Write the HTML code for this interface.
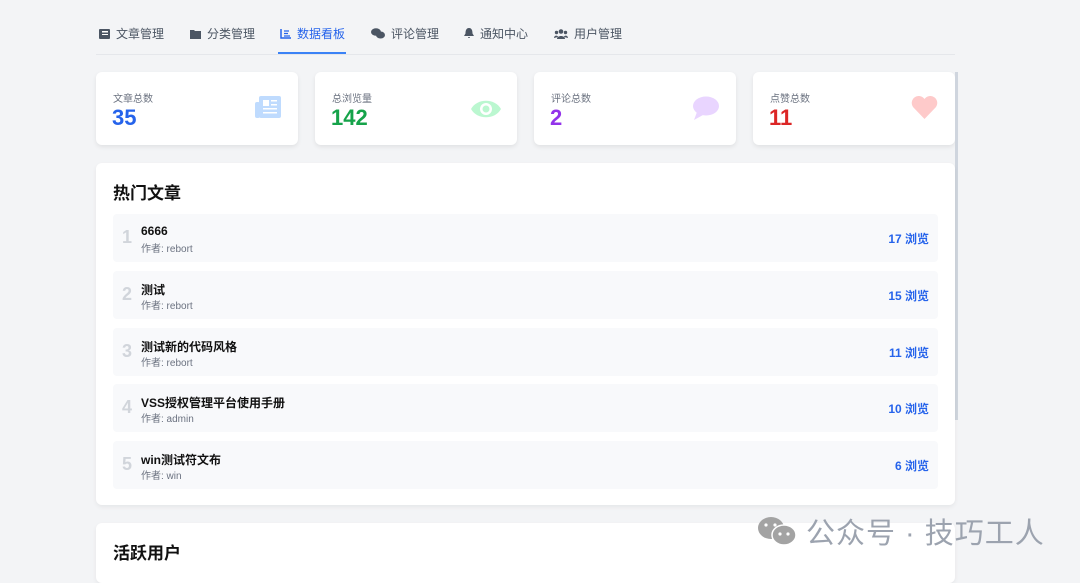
<!DOCTYPE html>
<html><head><meta charset="utf-8"><style>
*{margin:0;padding:0;box-sizing:border-box}
body{width:1080px;height:572px;overflow:hidden;background:#f3f4f6;font-family:"Liberation Sans","Noto Sans CJK SC",sans-serif;position:relative}
.tabs{position:absolute;left:96px;top:0;width:859px;height:55px;border-bottom:1px solid #e5e7eb}
.tab{position:absolute;top:25px;font-size:12px;color:#4b5563;display:flex;align-items:center;gap:6px}
.tab.act{color:#2563eb}
.ul{position:absolute;left:278px;top:52px;width:68px;height:2px;background:#3b82f6}
.card{position:absolute;top:72px;width:202px;height:73px;background:#fff;border-radius:6px;box-shadow:0 2px 5px rgba(0,0,0,.08)}
.card .l{position:absolute;left:17px;top:18px;font-size:10px;color:#6b7280}
.card .n{position:absolute;left:16px;top:33px;font-size:22px;font-weight:bold}
.card svg{position:absolute;right:17px;top:24px}
.panel{position:absolute;left:96px;width:859px;background:#fff;border-radius:6px;box-shadow:0 2px 5px rgba(0,0,0,.06)}
h2{position:absolute;left:17px;font-size:17px;font-weight:bold;color:#111}
.row{position:absolute;left:17px;width:825px;height:48px;background:#f8f9fb;border-radius:4px}
.row .k{position:absolute;left:9px;top:13px;font-size:18px;font-weight:bold;color:#d1d5db}
.row .t{position:absolute;left:28px;top:10px;font-size:12px;font-weight:bold;color:#111}
.row .a{position:absolute;left:28px;top:26px;font-size:10px;color:#6b7280}
.row .v{position:absolute;right:9px;top:16px;font-size:12px;font-weight:bold;color:#2563eb}
.sb{position:absolute;left:955px;top:72px;width:3px;height:348px;background:#cfd5de}
.wm{position:absolute;left:757px;top:510px;font-size:29px;color:#9ca3af;display:flex;align-items:center;gap:9px;letter-spacing:1px}
</style></head><body>
<div class="tabs">
<div class="tab" style="left:3px"><svg width="11" height="10"><rect x="0" y="0" width="11" height="10" rx="1" fill="#4b5563"/><rect x="3" y="2" width="6" height="1.5" fill="#fff"/><rect x="3" y="5" width="6" height="1" fill="#fff"/></svg>文章管理</div>
<div class="tab" style="left:94px"><svg width="11" height="10"><path d="M0 1h4l1 1h6v8H0z" fill="#4b5563"/></svg>分类管理</div>
<div class="tab act" style="left:184px"><svg width="11" height="10"><path d="M1 0v9h10" stroke="#2563eb" stroke-width="1.5" fill="none"/><path d="M4 2h5M4 4.5h4M4 7h6" stroke="#2563eb" stroke-width="1.3"/></svg>数据看板</div>
<div class="tab" style="left:275px"><svg width="14" height="11"><ellipse cx="5" cy="4" rx="5" ry="3.7" fill="#4b5563"/><ellipse cx="9.5" cy="7" rx="4.5" ry="3.5" fill="#4b5563"/></svg>评论管理</div>
<div class="tab" style="left:368px"><svg width="10" height="11"><path d="M5 0c3 0 3.5 3 3.5 5.5L10 8H0l1.5-2.5C1.5 3 2 0 5 0zM4 9h2a1 1 0 01-2 0z" fill="#4b5563"/></svg>通知中心</div>
<div class="tab" style="left:458px"><svg width="14" height="10"><circle cx="7" cy="2.5" r="2.3" fill="#4b5563"/><circle cx="2.5" cy="3.5" r="1.7" fill="#4b5563"/><circle cx="11.5" cy="3.5" r="1.7" fill="#4b5563"/><path d="M3 10c0-4 8-4 8 0zM0 9c0-3 4-3 4-1zM14 9c0-3-4-3-4-1z" fill="#4b5563"/></svg>用户管理</div>
</div>
<div class="ul"></div>
<div class="card" style="left:96px"><div class="l">文章总数</div><div class="n" style="color:#2563eb">35</div><svg width="26" height="24"><rect x="4" y="0" width="22" height="22" rx="2" fill="#bfdbfe"/><rect x="0" y="6" width="5" height="16" rx="2" fill="#bfdbfe"/><rect x="8" y="4" width="6" height="6" fill="#fff"/><rect x="16" y="4" width="6" height="1.5" fill="#fff"/><rect x="16" y="8" width="6" height="1.5" fill="#fff"/><rect x="8" y="12" width="14" height="1.5" fill="#fff"/><rect x="8" y="16" width="14" height="1.5" fill="#fff"/></svg></div>
<div class="card" style="left:315px"><div class="l">总浏览量</div><div class="n" style="color:#16a34a">142</div><svg width="30" height="22" style="top:26px;right:16px"><path d="M0 11C6 0 24 0 30 11C24 22 6 22 0 11z" fill="#bbf7d0"/><circle cx="15" cy="11" r="6" fill="#fff"/><circle cx="15" cy="11" r="3.5" fill="#bbf7d0"/></svg></div>
<div class="card" style="left:534px"><div class="l">评论总数</div><div class="n" style="color:#9333ea">2</div><svg width="28" height="24"><ellipse cx="15" cy="10" rx="13" ry="9.5" fill="#e9d5ff"/><path d="M3 24l3-8 6 3z" fill="#e9d5ff"/></svg></div>
<div class="card" style="left:753px"><div class="l">点赞总数</div><div class="n" style="color:#dc2626">11</div><svg width="27" height="24"><path d="M13.5 23L2 11A6.5 6.5 0 0113.5 3A6.5 6.5 0 0125 11z" fill="#fecaca"/></svg></div>
<div class="sb"></div>
<div class="panel" style="top:163px;height:342px">
<h2 style="top:16px">热门文章</h2>
<div class="row" style="top:51px"><div class="k">1</div><div class="t">6666</div><div class="a">作者: rebort</div><div class="v">17 浏览</div></div>
<div class="row" style="top:108px"><div class="k">2</div><div class="t">测试</div><div class="a">作者: rebort</div><div class="v">15 浏览</div></div>
<div class="row" style="top:165px"><div class="k">3</div><div class="t">测试新的代码风格</div><div class="a">作者: rebort</div><div class="v">11 浏览</div></div>
<div class="row" style="top:221px"><div class="k">4</div><div class="t">VSS授权管理平台使用手册</div><div class="a">作者: admin</div><div class="v">10 浏览</div></div>
<div class="row" style="top:278px"><div class="k">5</div><div class="t">win测试符文布</div><div class="a">作者: win</div><div class="v">6 浏览</div></div>
</div>
<div class="panel" style="top:523px;height:60px"><h2 style="top:16px">活跃用户</h2></div>
<div class="wm"><svg width="40" height="32"><ellipse cx="14" cy="13" rx="13" ry="11" fill="#a3a3a3"/><ellipse cx="27" cy="20" rx="12" ry="10" fill="#a3a3a3" stroke="#fff" stroke-width="1.5"/><circle cx="23" cy="19" r="1.6" fill="#fff"/><circle cx="31" cy="19" r="1.6" fill="#fff"/><circle cx="9" cy="10" r="1.6" fill="#fff"/><circle cx="18" cy="10" r="1.6" fill="#fff"/></svg><span>公众号 · 技巧工人</span></div>
</body></html>
